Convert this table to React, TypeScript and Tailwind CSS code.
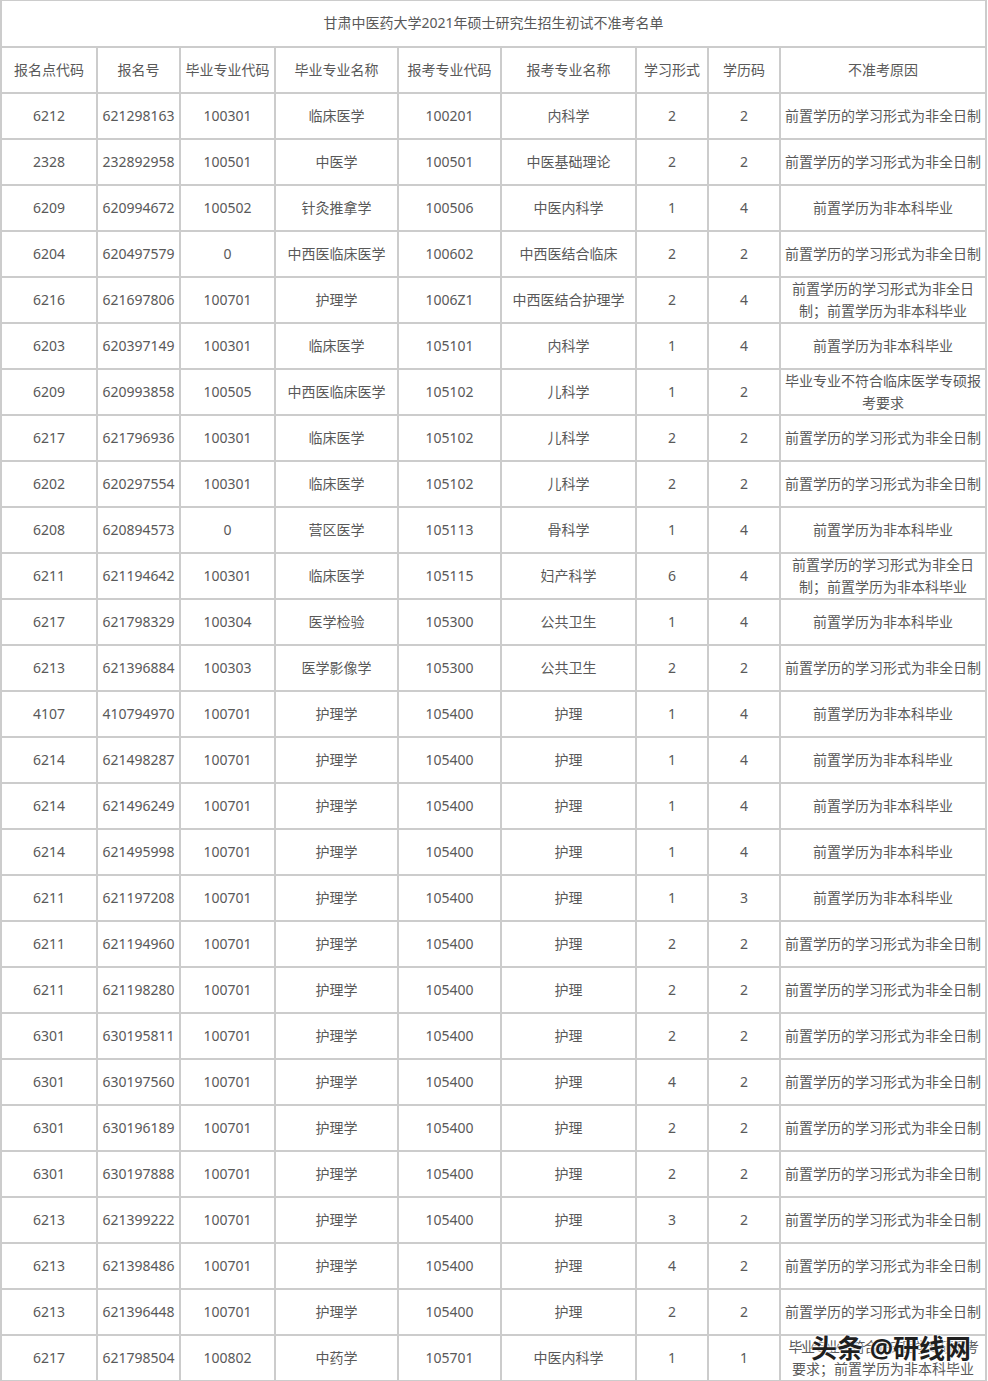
import React from 'react';

type Row = [string, string, string, string, string, string, string, string, string];

const REASON_A = '前置学历的学习形式为非全日制';
const REASON_B = '前置学历为非本科毕业';
const REASON_AB = '前置学历的学习形式为非全日制；前置学历为非本科毕业';

const headers = ['报名点代码', '报名号', '毕业专业代码', '毕业专业名称', '报考专业代码', '报考专业名称', '学习形式', '学历码', '不准考原因'];

const colWidths = ['w-[96px]', 'w-[83px]', 'w-[95px]', 'w-[123px]', 'w-[103px]', 'w-[135px]', 'w-[72px]', 'w-[72px]', 'w-[206px]'];

const rows: Row[] = [
  ['6212', '621298163', '100301', '临床医学', '100201', '内科学', '2', '2', REASON_A],
  ['2328', '232892958', '100501', '中医学', '100501', '中医基础理论', '2', '2', REASON_A],
  ['6209', '620994672', '100502', '针灸推拿学', '100506', '中医内科学', '1', '4', REASON_B],
  ['6204', '620497579', '0', '中西医临床医学', '100602', '中西医结合临床', '2', '2', REASON_A],
  ['6216', '621697806', '100701', '护理学', '1006Z1', '中西医结合护理学', '2', '4', REASON_AB],
  ['6203', '620397149', '100301', '临床医学', '105101', '内科学', '1', '4', REASON_B],
  ['6209', '620993858', '100505', '中西医临床医学', '105102', '儿科学', '1', '2', '毕业专业不符合临床医学专硕报考要求'],
  ['6217', '621796936', '100301', '临床医学', '105102', '儿科学', '2', '2', REASON_A],
  ['6202', '620297554', '100301', '临床医学', '105102', '儿科学', '2', '2', REASON_A],
  ['6208', '620894573', '0', '营区医学', '105113', '骨科学', '1', '4', REASON_B],
  ['6211', '621194642', '100301', '临床医学', '105115', '妇产科学', '6', '4', REASON_AB],
  ['6217', '621798329', '100304', '医学检验', '105300', '公共卫生', '1', '4', REASON_B],
  ['6213', '621396884', '100303', '医学影像学', '105300', '公共卫生', '2', '2', REASON_A],
  ['4107', '410794970', '100701', '护理学', '105400', '护理', '1', '4', REASON_B],
  ['6214', '621498287', '100701', '护理学', '105400', '护理', '1', '4', REASON_B],
  ['6214', '621496249', '100701', '护理学', '105400', '护理', '1', '4', REASON_B],
  ['6214', '621495998', '100701', '护理学', '105400', '护理', '1', '4', REASON_B],
  ['6211', '621197208', '100701', '护理学', '105400', '护理', '1', '3', REASON_B],
  ['6211', '621194960', '100701', '护理学', '105400', '护理', '2', '2', REASON_A],
  ['6211', '621198280', '100701', '护理学', '105400', '护理', '2', '2', REASON_A],
  ['6301', '630195811', '100701', '护理学', '105400', '护理', '2', '2', REASON_A],
  ['6301', '630197560', '100701', '护理学', '105400', '护理', '4', '2', REASON_A],
  ['6301', '630196189', '100701', '护理学', '105400', '护理', '2', '2', REASON_A],
  ['6301', '630197888', '100701', '护理学', '105400', '护理', '2', '2', REASON_A],
  ['6213', '621399222', '100701', '护理学', '105400', '护理', '3', '2', REASON_A],
  ['6213', '621398486', '100701', '护理学', '105400', '护理', '4', '2', REASON_A],
  ['6213', '621396448', '100701', '护理学', '105400', '护理', '2', '2', REASON_A],
];

const cell = 'border-2 border-[#cccccc] h-[46px] p-0 text-center align-middle';

export default function App() {
  return (
    <div
      className="relative w-[988px] bg-white text-[14px] leading-[22px] text-[#595959]"
      style={{ fontFamily: '"Noto Sans", "Noto Sans CJK SC", sans-serif' }}
    >
      <table className="w-[986px] table-fixed border-collapse">
        <colgroup>
          {colWidths.map((w, i) => (
            <col key={i} className={w} />
          ))}
        </colgroup>
        <tbody>
          <tr>
            <td colSpan={9} className={`${cell} border-t-[1px]`}>
              甘肃中医药大学2021年硕士研究生招生初试不准考名单
            </td>
          </tr>
          <tr>
            {headers.map((h) => (
              <td key={h} className={`${cell} whitespace-nowrap`}>
                {h}
              </td>
            ))}
          </tr>
          {rows.map((r, i) => (
            <tr key={i}>
              {r.map((v, j) => (
                <td key={j} className={`${cell} ${j === 8 ? 'px-[4px]' : 'whitespace-nowrap'}`}>
                  {v}
                </td>
              ))}
            </tr>
          ))}
          <tr>
            {['6217', '621798504', '100802', '中药学', '105701', '中医内科学', '1', '1'].map((v, j) => (
              <td key={j} className={`${cell} whitespace-nowrap`}>
                {v}
              </td>
            ))}
            <td className={`${cell} px-[2px]`}>
              <div className="whitespace-nowrap tracking-[-1.4px]">毕业专业不符合临床医学专硕报考</div>
              <div className="whitespace-nowrap">要求；前置学历为非本科毕业</div>
            </td>
          </tr>
        </tbody>
      </table>

      {/* watermark */}
      <div
        className="absolute left-[811px] top-[1332px] text-[26px] leading-[32px] font-bold text-[#1f1f1f] whitespace-nowrap"
        style={{ textShadow: '0 0 2px #fff, 0 0 2px #fff, 0 0 3px #fff' }}
      >
        头条 @研线网
      </div>
    </div>
  );
}
